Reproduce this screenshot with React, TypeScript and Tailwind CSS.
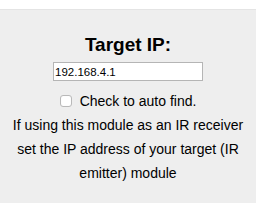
export default function App() {
  return (
    <div className="w-[256px] h-[203px] flex flex-col bg-white font-['Liberation_Sans',Arial,sans-serif] text-black overflow-hidden">
      <div className="h-[10px] shrink-0 bg-white border-b border-[#e4e4e4]" />
      <div className="flex-1 bg-[#eeeeee] flex flex-col items-center px-2 pt-[24px]">
        <h3 className="text-[19px] leading-[22px] font-bold">Target IP:</h3>
        <input
          type="text"
          defaultValue="192.168.4.1"
          className="mt-[6px] w-[150px] h-[19px] bg-white border border-[#b5b5b5] px-[1px] text-[11.5px] outline-none"
        />
        <label className="mt-[12px] flex items-center gap-[8px] text-[14px] leading-[16px]">
          <span className="w-[12px] h-[12px] rounded-[3px] border border-[#b9b9b9] bg-white shadow-[inset_0_0_1px_rgba(0,0,0,0.1)]" />
          Check to auto find.
        </label>
        <p className="mt-[4px] text-[14px] leading-[24px] text-center">
          If using this module as an IR receiver set the IP address of your target (IR emitter) module
        </p>
      </div>
    </div>
  );
}
